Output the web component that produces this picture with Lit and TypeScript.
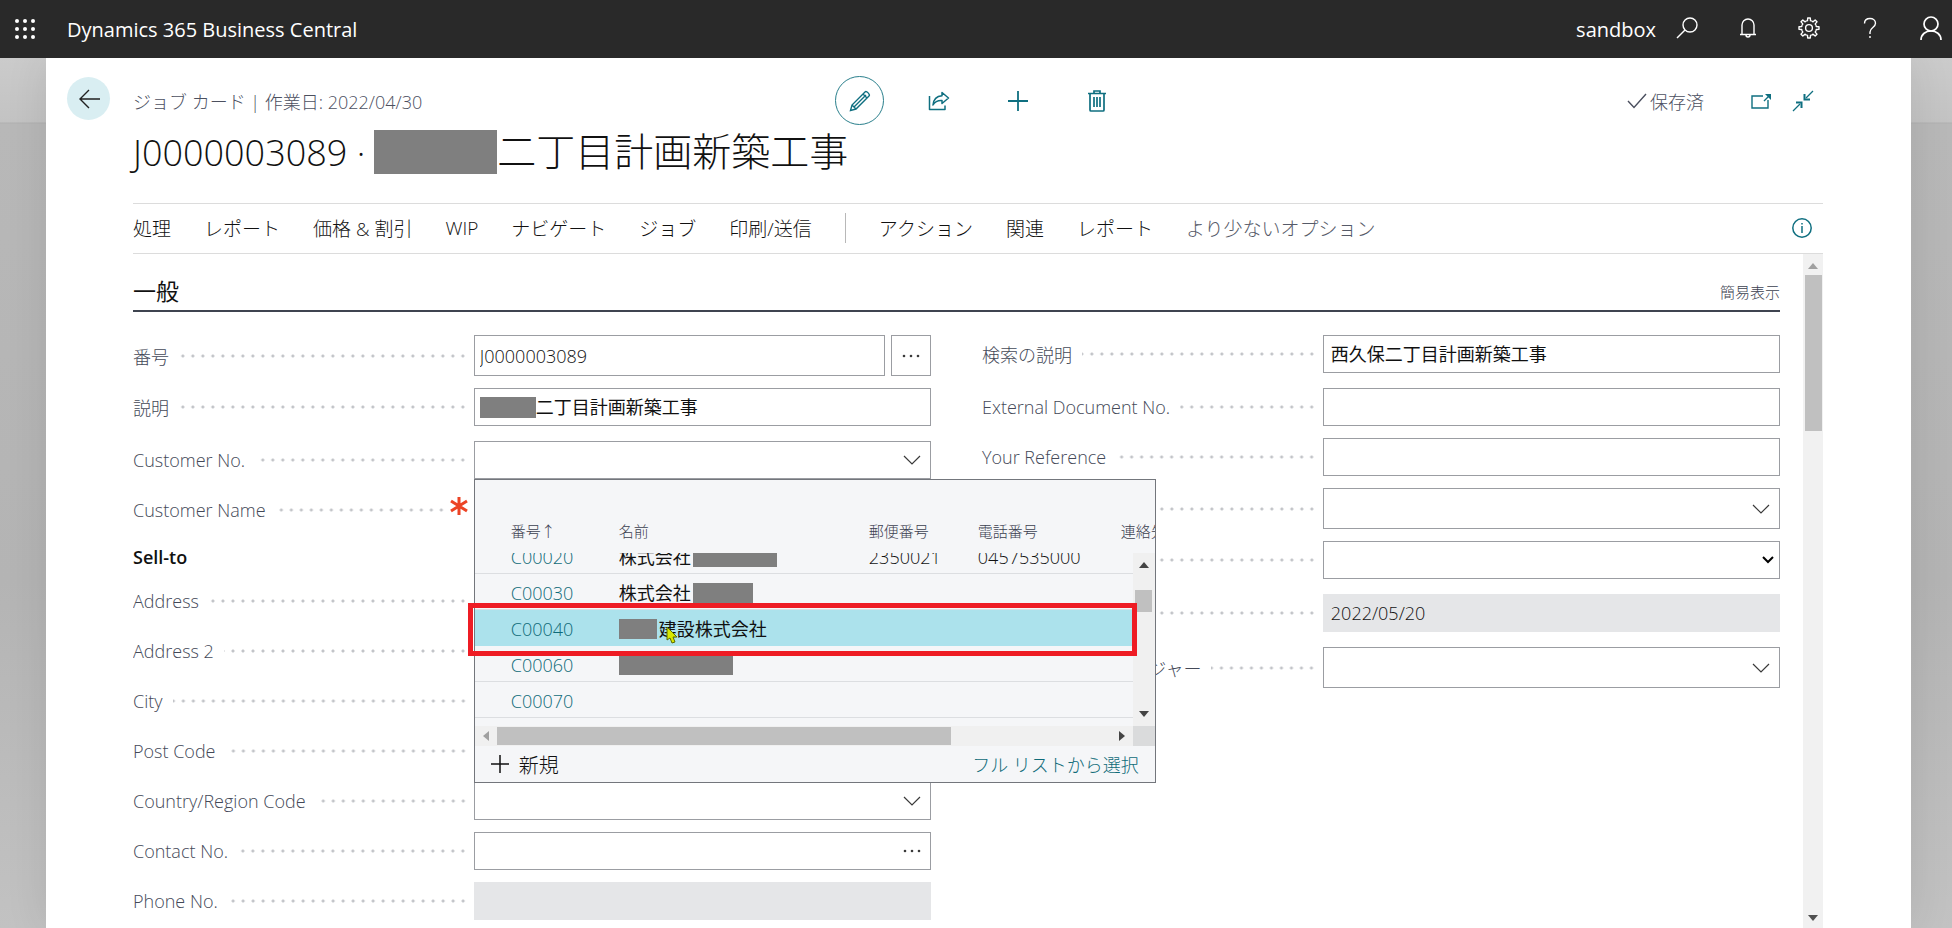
import { LitElement, html, css, svg, nothing } from "lit";
import { customElement, property } from "lit/decorators.js";

type Kind = "text" | "lookup" | "assist" | "more" | "select" | "readonly";

interface Field {
  id: string;
  label: string;
  kind: Kind;
  value?: string;
  strong?: boolean;
  masked?: boolean;
  required?: boolean;
  tall?: boolean;
  loose?: boolean;
  popup?: boolean;
}

interface Customer {
  no: string;
  before?: number;
  name?: string;
  after?: number;
  zip?: string;
  phone?: string;
  selected?: boolean;
}

const LEFT: Field[] = [
  { id: "no", label: "番号", kind: "assist", value: "J0000003089", tall: true },
  { id: "desc", label: "説明", kind: "text", value: "二丁目計画新築工事", masked: true, strong: true },
  { id: "custno", label: "Customer No.", kind: "lookup", loose: true, popup: true },
  { id: "custname", label: "Customer Name", kind: "text", required: true },
];

const SELL_TO: Field[] = [
  { id: "addr", label: "Address", kind: "text" },
  { id: "addr2", label: "Address 2", kind: "text" },
  { id: "city", label: "City", kind: "text" },
  { id: "post", label: "Post Code", kind: "text" },
  { id: "country", label: "Country/Region Code", kind: "lookup" },
  { id: "contact", label: "Contact No.", kind: "more" },
  { id: "phone", label: "Phone No.", kind: "readonly" },
];

const RIGHT: Field[] = [
  { id: "search", label: "検索の説明", kind: "text", value: "西久保二丁目計画新築工事", strong: true },
  { id: "ext", label: "External Document No.", kind: "text", loose: true },
  { id: "ref", label: "Your Reference", kind: "text" },
  { id: "resp", label: "責任者", kind: "lookup", tall: true },
  { id: "blocked", label: "ブロック", kind: "select" },
  { id: "modified", label: "最終更新日", kind: "readonly", value: "2022/05/20", loose: true },
  { id: "manager", label: "プロジェクト マネージャー", kind: "lookup", tall: true, loose: true },
];

const CUSTOMERS: Customer[] = [
  { no: "C00020", name: "株式会社", after: 84, zip: "2350021", phone: "0457535000" },
  { no: "C00030", name: "株式会社", after: 60 },
  { no: "C00040", before: 38, name: "建設株式会社", selected: true },
  { no: "C00060", before: 114 },
  { no: "C00070" },
];

const chevron = html`<svg class="chev" viewBox="0 0 18 10" width="18" height="10" aria-hidden="true">
  <path d="M1 1 L9 9 L17 1" fill="none" stroke="currentColor" stroke-width="1.2" />
</svg>`;

const arrow = (d: string) => html`<svg viewBox="0 0 10 10" width="10" height="10" aria-hidden="true">
  <path d=${d} fill="currentColor" />
</svg>`;
const UP = "M0 8 L5 2 L10 8 Z";
const DOWN = "M0 2 L5 8 L10 2 Z";
const PREV = "M8 0 L2 5 L8 10 Z";
const NEXT = "M2 0 L8 5 L2 10 Z";

const gearTeeth = [0, 45, 90, 135, 180, 225, 270, 315];

@customElement("customer-lookup")
export class CustomerLookup extends LitElement {
  static styles = css`
    :host { display: block; position: relative; box-sizing: border-box; width: 682px; border: 1px solid #73767c; background: #f5f6f8; color: #111; font-size: 18px; }
    .grid { display: grid; grid-template-columns: minmax(0, 1fr) 22px; grid-template-rows: 73px 173px 20px; overflow: hidden; }
    table { grid-area: 1 / 1 / 3 / 3; display: flex; flex-direction: column; min-width: 0; overflow: hidden; }
    thead { display: block; height: 73px; box-sizing: border-box; padding-top: 39px; }
    tbody { display: flex; flex-direction: column; justify-content: flex-end; height: 173px; box-sizing: border-box; padding-bottom: 8px; overflow: hidden; margin-right: 22px; }
    tr { display: grid; grid-template-columns: 108px 250px 109px 143px minmax(60px, 1fr); padding-left: 36px; flex: none; }
    th, td { padding: 0; text-align: left; font-weight: inherit; white-space: nowrap; }
    th { font-size: 15px; line-height: 24px; color: #3c4150; }
    tbody tr { height: 36px; box-sizing: border-box; border-bottom: 1px solid #dcdee1; }
    td { display: flex; align-items: center; gap: 2px; line-height: 31px; padding-top: 3px; }
    .name { font-weight: 400; }
    tr.selected { background: #ace2ec; border-bottom-color: #ace2ec; }
    .mask { display: block; height: 20px; background: #7f7f7f; }
    a { color: #0f6b79; text-decoration: none; }
    .vbar { grid-area: 2 / 2; display: flex; flex-direction: column; align-items: center; justify-content: space-between; background: #f0f0f0; color: #444; padding: 7px 0; box-sizing: border-box; }
    .vthumb { width: 17px; height: 22px; background: #c0c0c0; margin-bottom: 78px; }
    .hbar { grid-area: 3 / 1; display: flex; align-items: center; background: #f0f0f0; color: #444; padding: 0 6px; gap: 6px; }
    .hbar .off { color: #a0a0a0; }
    .track { flex: 1; height: 18px; }
    .hthumb { width: 74%; height: 18px; background: #c0c0c0; }
    .corner { grid-area: 3 / 2; background: #dadbdc; }
    svg { display: block; flex: none; }
    footer { display: flex; align-items: center; justify-content: space-between; height: 36px; padding: 0 16px; }
    button { display: flex; align-items: center; gap: 10px; font: inherit; font-size: 20px; color: inherit; border: 0; background: none; padding: 0; }
    .focus { position: absolute; left: -7px; top: 123px; right: 18px; height: 53px; box-sizing: border-box; border: 5px solid #ee1c24; }
    .cursor { position: absolute; left: 191px; top: 146px; }
  `;

  render() {
    return html`
      <div class="grid">
        <table>
          <thead>
            <tr><th>番号↑</th><th>名前</th><th>郵便番号</th><th>電話番号</th><th>連絡先</th></tr>
          </thead>
          <tbody>
            ${CUSTOMERS.map(
              (c) => html`<tr class=${c.selected ? "selected" : ""}>
                <td><a href="#">${c.no}</a></td>
                <td class="name">
                  ${c.before ? html`<span class="mask" style="width:${c.before}px"></span>` : nothing}${c.name ?? nothing}${c.after
                    ? html`<span class="mask" style="width:${c.after}px"></span>`
                    : nothing}
                </td>
                <td>${c.zip ?? nothing}</td>
                <td>${c.phone ?? nothing}</td>
                <td></td>
              </tr>`
            )}
          </tbody>
        </table>
        <div class="vbar">${arrow(UP)}<div class="vthumb"></div>${arrow(DOWN)}</div>
        <div class="hbar"><span class="off">${arrow(PREV)}</span><div class="track"><div class="hthumb"></div></div>${arrow(NEXT)}</div>
        <div class="corner"></div>
      </div>
      <footer>
        <button type="button">
          <svg viewBox="0 0 18 18" width="18" height="18" aria-hidden="true"><path d="M9 0 V18 M0 9 H18" stroke="currentColor" stroke-width="1.5" /></svg>
          新規
        </button>
        <a href="#">フル リストから選択</a>
      </footer>
      <div class="focus"></div>
      <svg class="cursor" viewBox="0 0 12 18" width="12" height="18" aria-hidden="true">
        <path d="M1 1 L11 11 L7 11 L9 16 L6 17 L4 12 L1 14 Z" fill="#d8e800" stroke="#5b6a00" stroke-width="1" />
      </svg>
    `;
  }
}

@customElement("card-field")
export class CardField extends LitElement {
  @property({ attribute: false }) field!: Field;

  static styles = css`
    :host { display: block; margin-top: 12px; }
    :host(.loose) { margin-top: 15px; }
    :host(:first-child) { margin-top: 0; }
    .row { display: grid; grid-template-columns: 85fr 114fr; height: 38px; }
    .row.tall { height: 41px; }
    .caption { display: flex; align-items: center; min-width: 0; padding-right: 6px; }
    label { flex: none; color: #444958; white-space: nowrap; }
    .leader { flex: 1; height: 4px; margin-left: 10px; background: radial-gradient(circle at 5px 2px, #c2c4c8 1px, #c2c4c800 2px) right center / 10px 4px repeat-x; }
    .star { flex: none; margin: -8px 0 0 4px; }
    .control { position: relative; display: flex; gap: 6px; min-width: 0; }
    .box { flex: 1; display: flex; align-items: center; min-width: 0; box-sizing: border-box; border: 1px solid #9b9da2; background: #fff; color: #111; }
    .box.readonly { border-color: #e5e6e8; background: #e5e6e8; }
    input { flex: 1; min-width: 0; width: 100%; height: 100%; box-sizing: border-box; border: 0; outline: 0; background: none; padding: 0 7px; font: inherit; color: inherit; }
    .narrow { padding-left: 5px; }
    .strong { font-weight: 400; padding-bottom: 2px; }
    .mask { flex: none; width: 56px; height: 21px; margin-left: 5px; background: #7f7f7f; }
    .mask + input { padding-left: 0; }
    select { flex: 1; height: 100%; border: 0; outline: 0; background: none; font: inherit; appearance: none; }
    .icon { flex: none; display: flex; align-items: center; justify-content: center; border: 0; background: none; padding: 0; color: #3a3a3a; }
    .in { width: 36px; height: 100%; }
    .sel { margin-right: 5px; color: #000; }
    .assist + .assist { width: 40px; border: 1px solid #9b9da2; background: #fff; }
    svg { display: block; }
    .menu { position: absolute; left: 0; top: 100%; z-index: 2; }
  `;

  private ellipsis() {
    return html`<svg viewBox="0 0 18 4" width="18" height="4" aria-hidden="true">
      <circle cx="2" cy="2" r="1.3" fill="currentColor" /><circle cx="9" cy="2" r="1.3" fill="currentColor" /><circle cx="16" cy="2" r="1.3" fill="currentColor" />
    </svg>`;
  }

  private control(f: Field) {
    if (f.kind === "select") {
      return html`<div class="box">
        <select id=${f.id}><option></option></select>
        <svg class="sel" viewBox="0 0 12 8" width="12" height="8" aria-hidden="true"><path d="M1 1 L6 6 L11 1" fill="none" stroke="currentColor" stroke-width="2" /></svg>
      </div>`;
    }
    const tone = f.kind === "assist" ? "narrow" : f.strong ? "strong" : "";
    return html`
      <div class="box ${f.kind}">
        ${f.masked ? html`<span class="mask"></span>` : nothing}
        <input id=${f.id} class=${tone} .value=${f.value ?? ""} ?readonly=${f.kind === "readonly"} />
        ${f.kind === "lookup" ? html`<button class="icon in" type="button" aria-label="参照">${chevron}</button>` : nothing}
        ${f.kind === "more" ? html`<button class="icon in" type="button" aria-label="編集">${this.ellipsis()}</button>` : nothing}
      </div>
      ${f.kind === "assist" ? html`<button class="icon assist" type="button" aria-label="番号の選択">${this.ellipsis()}</button>` : nothing}
      ${f.popup ? html`<customer-lookup class="menu"></customer-lookup>` : nothing}
    `;
  }

  render() {
    const f = this.field;
    return html`<div class="row ${f.tall ? "tall" : ""}">
      <div class="caption">
        <label for=${f.id}>${f.label}</label>
        <span class="leader"></span>
        ${f.required
          ? html`<svg class="star" viewBox="0 0 18 18" width="18" height="18" aria-hidden="true"><path d="M9 0 V18 M1 4 L17 14 M17 4 L1 14" stroke="#ec4324" stroke-width="3" /></svg>`
          : nothing}
      </div>
      <div class="control">${this.control(f)}</div>
    </div>`;
  }
}

@customElement("app-root")
export class AppRoot extends LitElement {
  static styles = css`
    :host { display: flex; flex-direction: column; height: 100vh; overflow: hidden; font-family: "Open Sans", "Noto Sans CJK JP", sans-serif; font-weight: 300; font-size: 18px; color: #111; }
    * { box-sizing: border-box; }
    svg { display: block; flex: none; }
    button { font: inherit; color: inherit; border: 0; background: none; padding: 0; }
    a { color: inherit; text-decoration: none; }
    .top { flex: none; display: flex; align-items: center; height: 58px; padding: 0 9px 0 15px; background: #292929; color: #fff; font-weight: 400; }
    .brand { margin-left: 32px; font-size: 20px; padding-top: 1px; }
    .tools { margin-left: auto; display: flex; align-items: center; gap: 37px; padding-bottom: 3px; }
    .env { font-size: 20px; margin-right: -18px; padding-top: 4px; }
    .tool { display: flex; align-items: center; justify-content: center; width: 24px; height: 28px; }
    .stage { flex: 1; min-height: 0; display: flex; overflow: hidden; padding: 0 41px 0 46px; background: linear-gradient(#cbcbcb, #c3c3c3 64px, #b0b0b0 65px, #b8b8b8 66px, #b4b4b4 60%, #c2c2c2); }
    .page { flex: 1; min-width: 0; display: flex; flex-direction: column; background: #fff; padding-right: 88px; box-shadow: 0 0 40px #00000018; }
    header { flex: none; display: grid; grid-template-columns: 43px minmax(0, 1fr); column-gap: 23px; padding: 18px 0 28px 21px; }
    .back { width: 43px; height: 43px; border-radius: 50%; background: #d9eef2; display: flex; align-items: center; justify-content: center; margin-top: 1px; }
    .bar { display: grid; grid-template-columns: minmax(0, 1fr) auto minmax(0, 1fr); align-items: center; height: 49px; color: #4c505f; }
    .actions { display: flex; gap: 30px; color: #0f6f80; }
    .act { width: 49px; height: 49px; display: flex; align-items: center; justify-content: center; border-radius: 50%; }
    .act.on { border: 1px solid #2a7f8c; }
    .status { display: flex; align-items: center; justify-content: flex-end; padding-right: 9px; }
    .saved { display: flex; align-items: center; gap: 3px; margin-right: 47px; }
    .act2 { color: #0f6f80; margin-right: 20px; }
    .act2:last-child { margin-right: 0; }
    h1 { margin: 4px 0 0; grid-column: 2; display: flex; align-items: center; height: 46px; font-size: 36px; font-weight: 300; white-space: pre; }
    .mask { width: 123px; height: 44px; background: #7f7f7f; margin-left: 9px; }
    .subject { font-size: 39px; padding-bottom: 6px; }
    nav { flex: none; display: flex; align-items: center; gap: 33px; height: 51px; margin-left: 87px; padding-bottom: 2px; font-size: 19px; border-top: 1px solid #dcdcdc; border-bottom: 1px solid #dcdcdc; white-space: nowrap; }
    .sep { width: 1px; height: 30px; background: #b8b8b8; }
    .muted { color: #565a68; }
    .info { margin-left: auto; margin-right: 11px; color: #0f6f80; }
    .scroller { flex: 1; min-height: 0; display: flex; margin-left: 87px; }
    .content { flex: 1; min-width: 0; margin-right: 23px; overflow: hidden; }
    .section { display: flex; align-items: center; justify-content: space-between; height: 58px; padding-top: 18px; border-bottom: 2px solid #3f4450; margin-bottom: 23px; }
    h2 { margin: 0; font-size: 23px; font-weight: 400; padding-bottom: 3px; }
    .less { font-size: 15px; color: #3c4150; }
    .cols { display: grid; grid-template-columns: minmax(0, 1fr) minmax(0, 1fr); gap: 51px; }
    h3 { margin: 15px 0 0; font-size: 18px; font-weight: 600; line-height: 26px; height: 26px; }
    .vbar { flex: none; width: 20px; display: flex; flex-direction: column; align-items: center; background: #f1f1f1; color: #505050; padding: 7px 0 5px; gap: 4px; }
    .vbar .dim { color: #a0a0a0; }
    .thumb { width: 17px; height: 156px; background: #c0c0c0; margin-bottom: auto; }
  `;

  render() {
    const row = (f: Field) => html`<card-field class=${f.loose ? "loose" : ""} .field=${f}></card-field>`;
    return html`
      <div class="top">
        <button class="waffle" type="button" aria-label="アプリ起動ツール">
          <svg viewBox="0 0 20 20" width="20" height="20" aria-hidden="true">
            ${[2, 10, 18].map((y) => [2, 10, 18].map((x) => svg`<circle cx=${x} cy=${y} r="2" fill="#fff" />`))}
          </svg>
        </button>
        <span class="brand">Dynamics 365 Business Central</span>
        <div class="tools">
          <span class="env">sandbox</span>
          <button class="tool" type="button" aria-label="検索">
            <svg viewBox="0 0 24 24" width="24" height="24" aria-hidden="true"><circle cx="15" cy="9" r="7" fill="none" stroke="#fff" stroke-width="1.4" /><path d="M10 14 L2 22" stroke="#fff" stroke-width="1.4" /></svg>
          </button>
          <button class="tool" type="button" aria-label="通知">
            <svg viewBox="0 0 24 24" width="24" height="24" aria-hidden="true"><path d="M4 18.500 H20 M6 18.500 V9 A6 6 0 0 1 18 9 V18.500 M10 19 A2 2 0 0 0 14 19" fill="none" stroke="#fff" stroke-width="1.4" /></svg>
          </button>
          <button class="tool" type="button" aria-label="設定">
            <svg viewBox="0 0 24 24" width="24" height="24" aria-hidden="true">
              <g fill="none" stroke="#fff" stroke-width="1.4" stroke-linejoin="round">
                <circle cx="12" cy="12" r="3.400" />
                ${gearTeeth.map((a) => svg`<path transform="rotate(${a} 12 12)" d="M9.200 5.100 L10.500 4.700 L10.700 2 H13.300 L13.500 4.700 L14.800 5.100" />`)}
              </g>
            </svg>
          </button>
          <button class="tool" type="button" aria-label="ヘルプ">
            <svg viewBox="0 0 24 24" width="24" height="24" aria-hidden="true"><path d="M6.500 7.500 C6.500 4 9 2.500 12 2.500 C15 2.500 17.500 4.200 17.500 7.200 C17.500 11.500 12 11.500 12 16 V18 M12 20 V22" fill="none" stroke="#fff" stroke-width="1.4" /></svg>
          </button>
          <button class="tool" type="button" aria-label="アカウント">
            <svg viewBox="0 0 24 28" width="24" height="28" aria-hidden="true"><circle cx="12" cy="10" r="7" fill="none" stroke="#fff" stroke-width="1.700" /><path d="M2 26 C2 14 22 14 22 26" fill="none" stroke="#fff" stroke-width="1.700" /></svg>
          </button>
        </div>
      </div>
      <div class="stage">
        <main class="page">
          <header>
            <button class="back" type="button" aria-label="戻る">
              <svg viewBox="0 0 22 20" width="22" height="20" aria-hidden="true"><path d="M22 10 H2 M11 1 L2 10 L11 19" fill="none" stroke="#212121" stroke-width="1.4" /></svg>
            </button>
            <div class="bar">
              <span>ジョブ カード | 作業日: 2022/04/30</span>
              <div class="actions">
                <button class="act on" type="button" aria-label="編集">
                  <svg viewBox="0 0 22 22" width="22" height="22" aria-hidden="true"><path d="M1.500 20.500 L3 15 L16 2 C17.500 0.500 21.500 4.500 20 6 L7 19 Z M3 15 L7 19 M14 4 L18 8 M5 17 L17 5" fill="none" stroke="currentColor" stroke-width="1.4" /></svg>
                </button>
                <button class="act" type="button" aria-label="共有">
                  <svg viewBox="0 0 22 20" width="22" height="20" aria-hidden="true"><path d="M1.500 5 V18.500 H17 V14.500 M14 1.500 L20.500 7 L14 12.500 V9.500 C9.500 9.200 7 10.500 5 14 C5.500 8.500 9 5 14 4.700 Z" fill="none" stroke="currentColor" stroke-width="1.5" stroke-linejoin="round" /></svg>
                </button>
                <button class="act" type="button" aria-label="新規">
                  <svg viewBox="0 0 22 22" width="22" height="22" aria-hidden="true"><path d="M11 1 V21 M1 11 H21" stroke="currentColor" stroke-width="1.8" /></svg>
                </button>
                <button class="act" type="button" aria-label="削除">
                  <svg viewBox="0 0 18 22" width="18" height="22" aria-hidden="true"><path d="M0 3.500 H18 M6 3 V1 H12 V3 M2 3.500 V20 Q2 21 3 21 H15 Q16 21 16 20 V3.500 M6 7 V17 M9 7 V17 M12 7 V17" fill="none" stroke="currentColor" stroke-width="1.700" /></svg>
                </button>
              </div>
              <div class="status">
                <span class="saved">
                  <svg viewBox="0 0 20 16" width="20" height="16" aria-hidden="true"><path d="M1 8 L7 14.500 L19 1" fill="none" stroke="#4a4f5e" stroke-width="1.4" /></svg>
                  保存済
                </span>
                <button class="act2" type="button" aria-label="新しいウィンドウで開く">
                  <svg viewBox="0 0 21 16" width="21" height="16" aria-hidden="true"><path d="M12 3 H1 V15 H17 V7 M13 8 L18 3" fill="none" stroke="currentColor" stroke-width="1.4" /><path d="M14 1 H20 V7 Z" fill="currentColor" /></svg>
                </button>
                <button class="act2" type="button" aria-label="縮小">
                  <svg viewBox="0 0 22 22" width="22" height="22" aria-hidden="true"><path d="M21 1 L14 8 M1 21 L8 14" stroke="currentColor" stroke-width="1.3" /><path d="M12.500 4 V9.500 H18 M4 12.500 H9.500 V18" fill="none" stroke="currentColor" stroke-width="2" /></svg>
                </button>
              </div>
            </div>
            <h1>J0000003089 ·<span class="mask"></span><span class="subject">二丁目計画新築工事</span></h1>
          </header>
          <nav>
            ${["処理", "レポート", "価格 & 割引", "WIP", "ナビゲート", "ジョブ", "印刷/送信"].map((t) => html`<a href="#">${t}</a>`)}
            <span class="sep"></span>
            ${["アクション", "関連", "レポート"].map((t) => html`<a href="#">${t}</a>`)}
            <a class="muted" href="#">より少ないオプション</a>
            <button class="info" type="button" aria-label="情報">
              <svg viewBox="0 0 20 20" width="20" height="20" aria-hidden="true"><circle cx="10" cy="10" r="9.200" fill="none" stroke="currentColor" stroke-width="1.5" /><path d="M10 8 V15 M10 5 V6.500" stroke="currentColor" stroke-width="1.5" /></svg>
            </button>
          </nav>
          <div class="scroller">
            <div class="content">
              <div class="section"><h2>一般</h2><a class="less" href="#">簡易表示</a></div>
              <form class="cols">
                <div>${LEFT.map(row)}<h3>Sell-to</h3>${SELL_TO.map(row)}</div>
                <div>${RIGHT.map(row)}</div>
              </form>
            </div>
            <div class="vbar"><span class="dim">${arrow(UP)}</span><div class="thumb"></div>${arrow(DOWN)}</div>
          </div>
        </main>
      </div>
    `;
  }
}
